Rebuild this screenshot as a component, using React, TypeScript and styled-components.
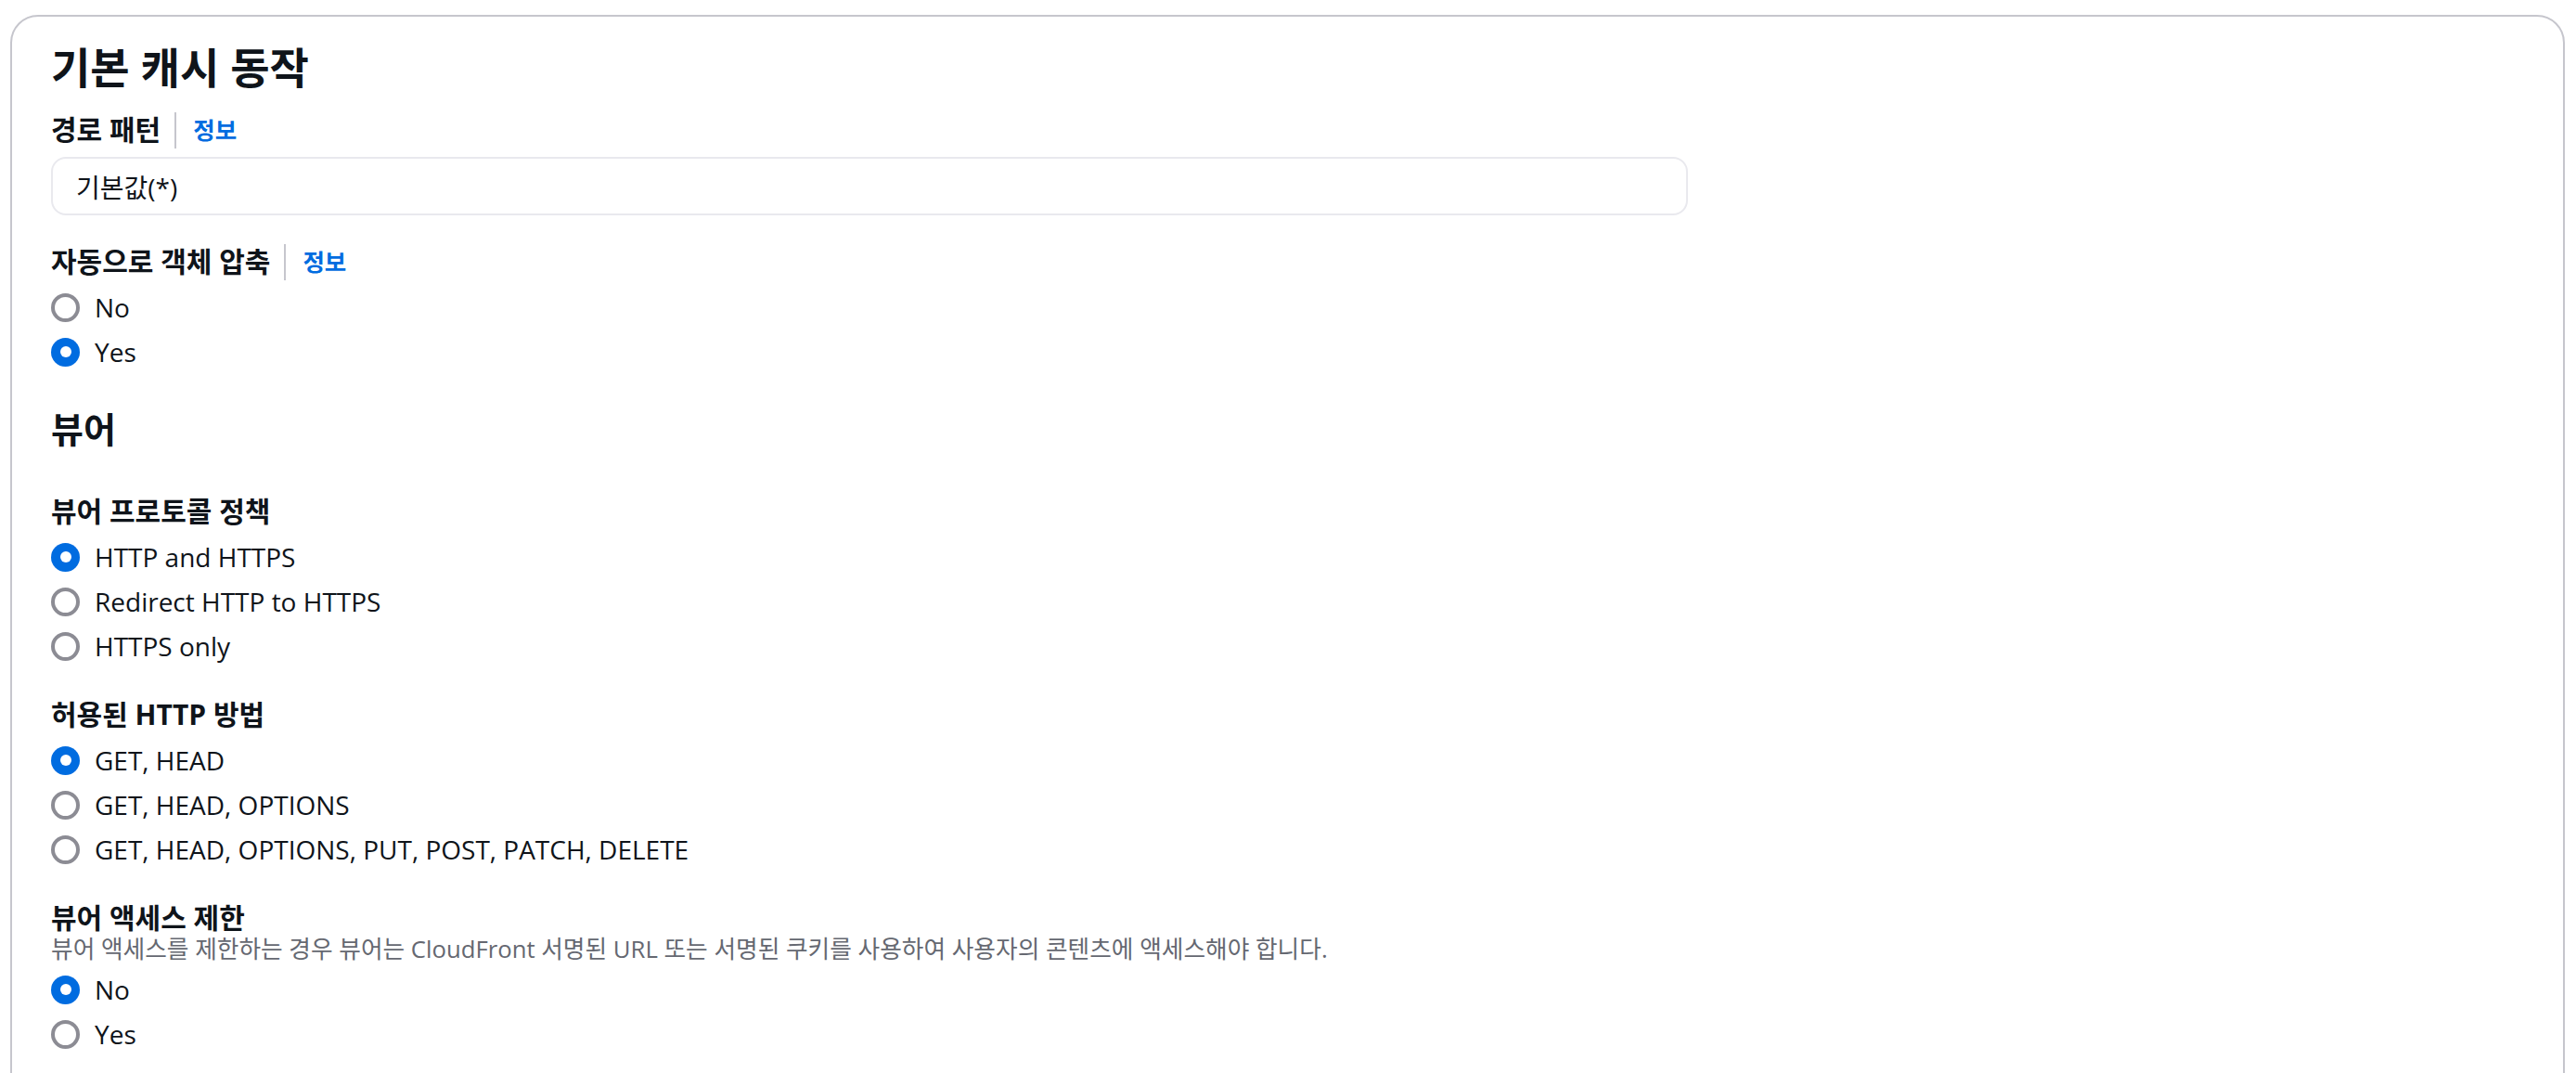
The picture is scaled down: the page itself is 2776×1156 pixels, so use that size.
import React from "react";
import styled, { createGlobalStyle } from "styled-components";

const GlobalStyle = createGlobalStyle`
    html, body {
        margin: 0;
        padding: 0;
        background: #ffffff;
    }
    body {
        font-family: "Open Sans", "Noto Sans CJK KR", sans-serif;
        color: #0f141a;
    }
`;

const Page = styled.div`
    padding: 16px 12px 0 11px;
`;

const Card = styled.div`
    border: 2px solid #c6c6cd;
    border-radius: 30px;
    padding: 30px 42px 60px 42px;
    display: flex;
    flex-direction: column;
`;

const Heading = styled.h2<{ $size: number; $line: number }>`
    margin: 0;
    font-size: ${(p) => p.$size}px;
    line-height: ${(p) => p.$line}px;
    font-weight: 700;
    color: #0f141a;
`;

const Stack = styled.div<{ $top: number }>`
    display: flex;
    flex-direction: column;
    gap: 30px;
    margin-top: ${(p) => p.$top}px;
`;

const Field = styled.div`
    display: flex;
    flex-direction: column;
`;

const LabelRow = styled.div`
    display: flex;
    align-items: center;
    height: 40px;
`;

const Label = styled.span`
    font-size: 30px;
    font-weight: 700;
    line-height: 40px;
    color: #0f141a;
`;

const Divider = styled.span`
    width: 2px;
    height: 39px;
    background: #c6c6cd;
    margin: 0 18px 0 15px;
`;

const InfoLink = styled.a`
    font-size: 25.5px;
    font-weight: 700;
    color: #006ce0;
    text-decoration: none;
    line-height: 40px;
`;

const Description = styled.div`
    font-size: 25.7px;
    line-height: 28px;
    color: #656871;
`;

const Input = styled.div`
    box-sizing: border-box;
    width: 1764px;
    height: 63px;
    margin-top: 9px;
    border: 2px solid #e9e9ee;
    border-radius: 16px;
    padding: 0 25px;
    display: flex;
    align-items: center;
    font-size: 28px;
    color: #0f141a;
`;

const RadioGroup = styled.div`
    display: flex;
    flex-direction: column;
    margin-top: 5px;
`;

const RadioItem = styled.label`
    display: flex;
    align-items: center;
    height: 48px;
    gap: 16px;
    font-size: 28px;
    color: #0f141a;
`;

const Circle = styled.span<{ $checked: boolean }>`
    box-sizing: border-box;
    width: 31px;
    height: 31px;
    border-radius: 50%;
    flex-shrink: 0;
    display: flex;
    align-items: center;
    justify-content: center;
    border: ${(p) => (p.$checked ? "none" : "4px solid #8c8c94")};
    background: ${(p) => (p.$checked ? "#006ce0" : "#ffffff")};
    &::after {
        content: "";
        display: ${(p) => (p.$checked ? "block" : "none")};
        width: 12px;
        height: 12px;
        border-radius: 50%;
        background: #ffffff;
    }
`;

interface RadiosProps {
    options: string[];
    selected: number;
}

const Radios = (props: RadiosProps) => (
    <RadioGroup>
        {props.options.map((opt, i) => (
            <RadioItem key={opt}>
                <Circle $checked={i === props.selected} />
                {opt}
            </RadioItem>
        ))}
    </RadioGroup>
);

interface FieldLabelProps {
    text: string;
    info?: boolean;
}

const FieldLabel = (props: FieldLabelProps) => (
    <LabelRow>
        <Label>{props.text}</Label>
        {props.info && (
            <>
                <Divider />
                <InfoLink href="#">정보</InfoLink>
            </>
        )}
    </LabelRow>
);

const App = () => {
    return (
        <Page>
            <GlobalStyle />
            <Card>
                <Heading $size={46} $line={48}>
                    기본 캐시 동작
                </Heading>
                <Stack $top={24}>
                    <Field>
                        <FieldLabel text="경로 패턴" info />
                        <Input>기본값(*)</Input>
                    </Field>
                    <Field>
                        <FieldLabel text="자동으로 객체 압축" info />
                        <Radios options={["No", "Yes"]} selected={1} />
                    </Field>
                </Stack>
                <Stack $top={37}>
                    <Heading $size={38} $line={44}>
                        뷰어
                    </Heading>
                </Stack>
                <Stack $top={47}>
                    <Field>
                        <FieldLabel text="뷰어 프로토콜 정책" />
                        <Radios
                            options={["HTTP and HTTPS", "Redirect HTTP to HTTPS", "HTTPS only"]}
                            selected={0}
                        />
                    </Field>
                    <Field>
                        <FieldLabel text="허용된 HTTP 방법" />
                        <Radios
                            options={[
                                "GET, HEAD",
                                "GET, HEAD, OPTIONS",
                                "GET, HEAD, OPTIONS, PUT, POST, PATCH, DELETE",
                            ]}
                            selected={0}
                        />
                    </Field>
                    <Field>
                        <FieldLabel text="뷰어 액세스 제한" />
                        <Description>
                            뷰어 액세스를 제한하는 경우 뷰어는 CloudFront 서명된 URL 또는 서명된 쿠키를
                            사용하여 사용자의 콘텐츠에 액세스해야 합니다.
                        </Description>
                        <Radios options={["No", "Yes"]} selected={0} />
                    </Field>
                </Stack>
            </Card>
        </Page>
    );
};

export default App;
